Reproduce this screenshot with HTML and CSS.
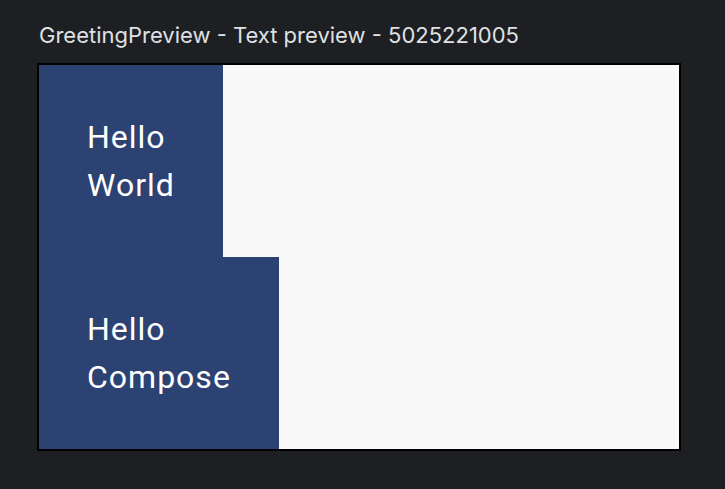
FILE: index.html
```html
<!DOCTYPE html>
<html lang="en">
<head>
  <meta charset="UTF-8">
  <meta name="viewport" content="width=device-width, initial-scale=1.0">
  <title>GreetingPreview</title>
  <link rel="stylesheet" href="styles.css">
</head>
<body>
  <div class="preview">
    <div class="preview-title">GreetingPreview - Text preview - 5025221005</div>
    <div class="frame">
      <div class="greeting">Hello<br>World</div>
      <div class="greeting">Hello<br>Compose</div>
    </div>
  </div>
</body>
</html>
```

FILE: styles.css
```css
html, body {
  margin: 0;
  background-color: #1e1f22;
}
.preview {
  padding: 20px 0 0 37px;
}
.preview-title {
  font-family: Inter, "Noto Sans", sans-serif;
  font-size: 22px;
  line-height: 30px;
  color: #dfe1e5;
  padding-left: 2px;
  margin-bottom: 13px;
}
.frame {
  width: 640px;
  height: 384px;
  border: 2px solid #000;
  background-color: #f9f9f9;
  display: flex;
  flex-direction: column;
  align-items: flex-start;
}
.greeting {
  background-color: #2b4272;
  color: #fff;
  font-family: Roboto, sans-serif;
  font-size: 32px;
  line-height: 48px;
  letter-spacing: 1px;
  padding: 48px;
}
```
